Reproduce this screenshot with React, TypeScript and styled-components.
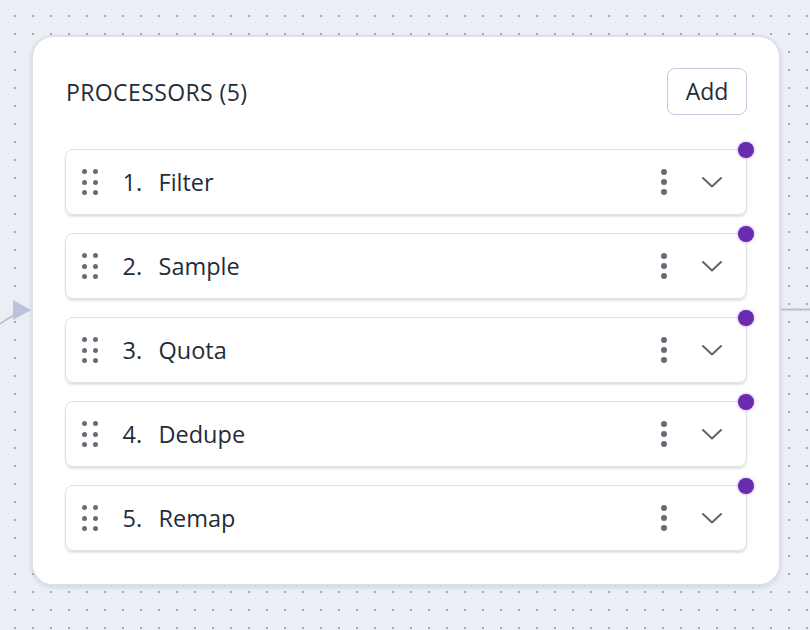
import styled, { createGlobalStyle } from "styled-components";

const processors = ["Filter", "Sample", "Quota", "Dedupe", "Remap"];

const GlobalStyle = createGlobalStyle`
  html, body {
    margin: 0;
    padding: 0;
  }
  body {
    font-family: "Open Sans", "Noto Sans", sans-serif;
    background-color: #ebeef5;
    background-image: radial-gradient(circle, #a4a9b3 1px, transparent 1.2px);
    background-size: 18px 18px;
    background-position: 6px 7px;
  }
`;

const Canvas = styled.div`
  position: relative;
  width: 810px;
  height: 630px;
  overflow: hidden;
  padding: 35px 29px 0 31px;
  box-sizing: border-box;
`;

const Edges = styled.svg`
  position: absolute;
  inset: 0;
  pointer-events: none;
`;

const Node = styled.div`
  position: relative;
  width: 750px;
  height: 551px;
  box-sizing: border-box;
  background: #fff;
  border: 2px solid #dcdfe8;
  border-radius: 22px;
  box-shadow: 0 2px 4px rgba(60, 70, 100, 0.12);
  padding: 31px 32px 0 32px;
  display: flex;
  flex-direction: column;
`;

const Header = styled.div`
  display: flex;
  align-items: center;
  justify-content: space-between;
  height: 47px;
  margin-bottom: 34px;
`;

const Title = styled.h2`
  margin: 0 0 0 1px;
  font-size: 23px;
  font-weight: 400;
  letter-spacing: 0.4px;
  color: #1f2d3a;
`;

const AddButton = styled.button`
  width: 80px;
  height: 47px;
  border: 1.5px solid #c3cadf;
  border-radius: 8px;
  background: #fff;
  font-family: inherit;
  font-size: 23px;
  color: #1f2d3a;
  padding: 0 0 2px;
`;

const List = styled.div`
  display: flex;
  flex-direction: column;
  gap: 18px;
`;

const Row = styled.div`
  position: relative;
  height: 66px;
  box-sizing: border-box;
  border: 1.5px solid #dde0e8;
  border-radius: 8px;
  box-shadow: 0 2px 2px rgba(40, 50, 80, 0.14);
  display: flex;
  align-items: center;
  padding: 0 24px 0 16px;
  color: #1f2d3a;
`;

const Handle = styled.div`
  display: grid;
  grid-template-columns: repeat(2, 5px);
  grid-auto-rows: 5px;
  column-gap: 5.5px;
  row-gap: 5.5px;
  margin-right: 25px;

  span {
    border-radius: 50%;
    background: #666d76;
  }
`;

const Index = styled.span`
  width: 36px;
  font-size: 23.5px;
`;

const Name = styled.span`
  flex: 1;
  font-size: 23.5px;
`;

const Kebab = styled.div`
  display: flex;
  flex-direction: column;
  gap: 4px;
  margin-right: 35px;

  span {
    width: 6px;
    height: 6px;
    border-radius: 50%;
    background: #666d76;
  }
`;

const Port = styled.div`
  position: absolute;
  top: -8.5px;
  right: -7.5px;
  width: 16px;
  height: 16px;
  border-radius: 50%;
  background: #6a2bb0;
  box-shadow: 0 0 3px rgba(106, 43, 176, 0.5);
`;

const Chevron = () => (
  <svg width="20" height="11" viewBox="0 0 20 11" fill="none">
    <path d="M1 1l9 8.5L19 1" stroke="#5f6670" strokeWidth="2" strokeLinecap="round" strokeLinejoin="round" />
  </svg>
);

export default function App() {
  return (
    <>
      <GlobalStyle />
      <Canvas>
        <Edges width="810" height="630">
          <line x1="-2" y1="325" x2="14" y2="315" stroke="#b8bed6" strokeWidth="1.5" />
          <polygon points="13,300 31,310 13,320" fill="#bcc2da" />
          <line x1="780" y1="309.5" x2="810" y2="309.5" stroke="#b8bed6" strokeWidth="2" />
        </Edges>
        <Node>
          <Header>
            <Title>PROCESSORS ({processors.length})</Title>
            <AddButton>Add</AddButton>
          </Header>
          <List>
            {processors.map((name, i) => (
              <Row key={name}>
                <Handle>
                  {Array.from({ length: 6 }).map((_, j) => (
                    <span key={j} />
                  ))}
                </Handle>
                <Index>{i + 1}.</Index>
                <Name>{name}</Name>
                <Kebab>
                  <span />
                  <span />
                  <span />
                </Kebab>
                <Chevron />
                <Port />
              </Row>
            ))}
          </List>
        </Node>
      </Canvas>
    </>
  );
}
